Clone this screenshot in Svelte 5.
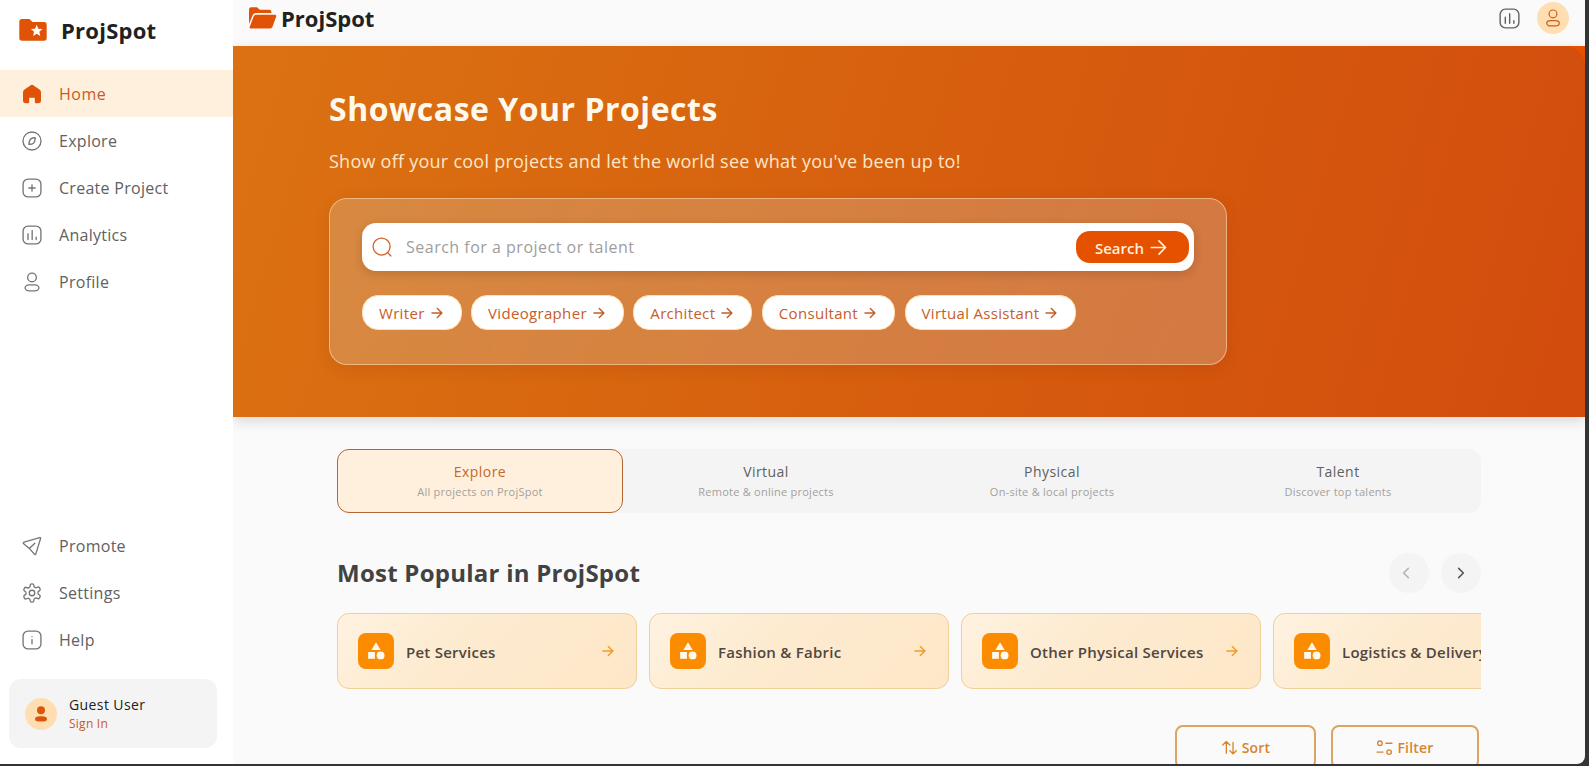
<script lang="ts">
  type NavItem = { label: string; icon: string };

  const mainNav: NavItem[] = [
    { label: "Home", icon: "home" },
    { label: "Explore", icon: "compass" },
    { label: "Create Project", icon: "add" },
    { label: "Analytics", icon: "chart" },
    { label: "Profile", icon: "user" },
  ];

  const footerNav: NavItem[] = [
    { label: "Promote", icon: "send" },
    { label: "Settings", icon: "gear" },
    { label: "Help", icon: "info" },
  ];

  const chips = ["Writer", "Videographer", "Architect", "Consultant", "Virtual Assistant"];

  const tabs = [
    { label: "Explore", hint: "All projects on ProjSpot" },
    { label: "Virtual", hint: "Remote & online projects" },
    { label: "Physical", hint: "On-site & local projects" },
    { label: "Talent", hint: "Discover top talents" },
  ];

  const categories = [
    "Pet Services",
    "Fashion & Fabric",
    "Other Physical Services",
    "Logistics & Delivery",
  ];

  let activePage = $state("Home");
  let activeTab = $state("Explore");
  let query = $state("");
</script>

{#snippet icon(name: string, size: number)}
  <svg
    class="icon"
    width={size}
    height={size}
    viewBox="0 0 24 24"
    fill="none"
    stroke="currentColor"
    stroke-width="1.6"
    stroke-linecap="round"
    stroke-linejoin="round"
    aria-hidden="true"
  >
    {#if name === "home"}
      <path
        fill="currentColor"
        stroke="none"
        transform="translate(-1.2 -1.2) scale(1.1)"
        d="M10.2 2.600 3.900 7.200C2.800 8 2.200 9.200 2.200 10.600v8.400a3 3 0 0 0 3 3H8a.9.900 0 0 0 .9-.9v-4.300a.6.600 0 0 1 .6-.6h5a.6.600 0 0 1 .6.600v4.300a.9.900 0 0 0 .9.900h2.800a3 3 0 0 0 3-3v-8.400c0-1.400-.6-2.600-1.700-3.400l-6.300-4.600a3 3 0 0 0-3.600 0z"
      />
    {:else if name === "compass"}
      <circle cx="12" cy="12" r="10.8" />
      <path d="M16 8.2c-1.8-.2-3.7.1-5 .9-1.5.9-2.4 3.4-2.8 6.8 2.5.2 4.2-.2 5.5-1.2 1.2-1 2-3.4 2.3-6.5z" />
    {:else if name === "add"}
      <rect x="1.3" y="1.3" width="21.4" height="21.4" rx="6" />
      <path d="M8.2 12h7.6M12 8.2v7.6" />
    {:else if name === "chart"}
      <rect x="1.3" y="1.3" width="21.4" height="21.4" rx="6" />
      <path d="M7.2 10.5v7M12.2 6.5v11M17 14.5v3" />
    {:else if name === "user"}
      <circle cx="12" cy="6.5" r="5.2" />
      <rect x="3.7" y="15.4" width="16.6" height="7.2" rx="5" ry="3.6" />
    {:else if name === "send"}
      <path d="M2.5 7.4 21.2 1.9c.8-.2 1.3.3 1.1 1.1L16.6 21.5c-.3.9-1.3 1-1.8.2L8.8 14.9 2 9.3c-.8-.6-.5-1.6.5-1.9zM8.8 14.9l6.6-6.2" />
    {:else if name === "gear"}
      <circle cx="12" cy="12" r="3.3" />
      <path
        d="M12.22 1h-.44a2 2 0 0 0-2 2v.68a2 2 0 0 1-1 1.73l-.63.35a2 2 0 0 1-2 0l-.45-.28a2 2 0 0 0-2.73.73l-.52.88a2 2 0 0 0 .73 2.73l.65.4a2 2 0 0 1 1 1.72v.51a2 2 0 0 1-1 1.74l-.65.39a2 2 0 0 0-.73 2.73l.52.88a2 2 0 0 0 2.73.73l.45-.28a2 2 0 0 1 2 0l.63.35a2 2 0 0 1 1 1.73V21a2 2 0 0 0 2 2h.44a2 2 0 0 0 2-2v-.68a2 2 0 0 1 1-1.73l.63-.35a2 2 0 0 1 2 0l.45.28a2 2 0 0 0 2.73-.73l.52-.89a2 2 0 0 0-.73-2.73l-.65-.38a2 2 0 0 1-1-1.74v-.5a2 2 0 0 1 1-1.74l.65-.39a2 2 0 0 0 .73-2.73l-.52-.88a2 2 0 0 0-2.73-.73l-.45.28a2 2 0 0 1-2 0l-.63-.35a2 2 0 0 1-1-1.73V3a2 2 0 0 0-2-2z"
      />
    {:else if name === "info"}
      <rect x="1.3" y="1.3" width="21.4" height="21.4" rx="6" />
      <path d="M12 11.5v5M12 8v.2" />
    {:else if name === "search"}
      <circle cx="11.5" cy="11.5" r="10.2" />
      <path d="m19.5 19.5 3.2 3.2" />
    {:else if name === "arrow"}
      <path d="M4.5 12H19M12.5 5.2 19.3 12l-6.8 6.8" />
    {:else if name === "sort"}
      <path d="M7.5 20V3.5M2.5 8.5l5-5 5 5M17 5v16M12.5 16.5 17 21l4.5-4.5" />
    {:else if name === "filter"}
      <circle cx="5.5" cy="6" r="3.2" />
      <circle cx="18.5" cy="18.5" r="3.2" />
      <path d="M14 6h8.5M1.5 18.5H10" />
    {:else if name === "left"}
      <path d="M15.5 5 8.5 12l7 7" />
    {:else if name === "right"}
      <path d="m8.5 5 7 7-7 7" />
    {:else if name === "category"}
      <path
        fill="currentColor"
        stroke="none"
        d="m12 1.6 5.6 9.2H6.4zM2.5 13.3h8.2v8H2.5z"
      />
      <circle cx="17.5" cy="17.3" r="4.7" fill="currentColor" stroke="none" />
    {/if}
  </svg>
{/snippet}

{#snippet navLink(item: NavItem)}
  <button
    type="button"
    class="nav-item"
    class:active={activePage === item.label}
    onclick={() => (activePage = item.label)}
  >
    {@render icon(item.icon, 20)}
    <span>{item.label}</span>
  </button>
{/snippet}

<div class="window">
  <aside class="sidebar">
    <div class="brand">
      <svg width="28" height="22" viewBox="0 0 28 22" aria-hidden="true">
        <path fill="#e05206" d="M3 0h7.5l3 3H25a2.7 2.7 0 0 1 2.7 2.7V19A2.7 2.7 0 0 1 25 21.7H3A2.7 2.7 0 0 1 .3 19V2.7A2.7 2.7 0 0 1 3 0z" />
        <path fill="#fff" d="m17.7 5.8 1.6 4 4.2.3-3.2 2.7 1 4.1-3.6-2.2-3.6 2.2 1-4.1-3.2-2.7 4.2-.3z" />
      </svg>
      <span class="brand-name">ProjSpot</span>
    </div>
    <nav class="nav">
      {#each mainNav as item (item.label)}
        {@render navLink(item)}
      {/each}
    </nav>
    <nav class="nav nav-footer">
      {#each footerNav as item (item.label)}
        {@render navLink(item)}
      {/each}
    </nav>
    <div class="guest">
      <div class="avatar">
        <svg width="14" height="16" viewBox="0 0 14 16" fill="#d9560b" aria-hidden="true">
          <circle cx="7" cy="4.2" r="4" />
          <rect x="1" y="10.3" width="12" height="5.2" rx="5" ry="2.6" />
        </svg>
      </div>
      <div class="guest-text">
        <span class="guest-name">Guest User</span>
        <a class="sign-in" href="#sign-in">Sign In</a>
      </div>
    </div>
  </aside>

  <div class="content">
    <header class="topbar">
      <svg width="28" height="22" viewBox="0 0 28 22" fill="#e05206" aria-hidden="true">
        <path d="M0 17V2.5A2.3 2.3 0 0 1 2.3.2H8l2.8 2.6h9.400A2.200 2.200 0 0 1 22.400 5v.9H7.200A4 4 0 0 0 3.400 8.700z" />
        <path d="M7.300 7.700h18.600c1 0 1.700.9 1.300 1.900l-3.700 10.200a2.600 2.600 0 0 1-2.400 1.700H1.800c-.9 0-1.400-.7-1.100-1.600L4.600 9.500a2.800 2.800 0 0 1 2.700-1.800z" />
      </svg>
      <span class="topbar-name">ProjSpot</span>
      <div class="topbar-actions">
        {@render icon("chart", 21)}
        <div class="avatar">{@render icon("user", 18)}</div>
      </div>
    </header>

    <section class="hero">
      <div class="hero-inner">
        <h1>Showcase Your Projects</h1>
        <p>Show off your cool projects and let the world see what you've been up to!</p>
        <div class="glass">
          <div class="search">
            {@render icon("search", 20)}
            <input placeholder="Search for a project or talent" bind:value={query} />
            <button type="button" class="search-btn">
              <span>Search</span>
              {@render icon("arrow", 23)}
            </button>
          </div>
          <div class="chips">
            {#each chips as chip (chip)}
              <button type="button" class="chip">{chip}{@render icon("arrow", 16)}</button>
            {/each}
          </div>
        </div>
      </div>
    </section>

    <main>
      <div class="tabs" role="tablist">
        {#each tabs as tab (tab.label)}
          <button
            type="button"
            role="tab"
            class="tab"
            class:active={activeTab === tab.label}
            aria-selected={activeTab === tab.label}
            onclick={() => (activeTab = tab.label)}
          >
            <span class="tab-label">{tab.label}</span>
            <span class="tab-hint">{tab.hint}</span>
          </button>
        {/each}
      </div>

      <div class="section-head">
        <h2>Most Popular in ProjSpot</h2>
        <div class="pager">
          <button type="button" class="prev" aria-label="Previous" disabled>
            {@render icon("left", 16)}
          </button>
          <button type="button" aria-label="Next">{@render icon("right", 16)}</button>
        </div>
      </div>

      <div class="cards">
        {#each categories as category (category)}
          <article class="card">
            <div class="card-icon">{@render icon("category", 20)}</div>
            <span class="card-name">{category}</span>
            {@render icon("arrow", 16)}
          </article>
        {/each}
      </div>

      <div class="tools">
        <button type="button" class="tool sort">{@render icon("sort", 17)}Sort</button>
        <button type="button" class="tool filter">{@render icon("filter", 17)}Filter</button>
      </div>
    </main>
  </div>
</div>

<style>
  :global(body) {
    background: #333435;
    overflow: hidden;
  }

  .window {
    display: flex;
    width: 1585px;
    height: 764px;
    overflow: hidden;
    border-bottom-right-radius: 8px;
    background: #fafafa;
    font-family: "Open Sans", "Noto Sans", sans-serif;
    color: #212121;
  }

  button,
  input {
    font: inherit;
    letter-spacing: inherit;
    border: none;
    background: none;
    padding: 0;
    color: inherit;
  }

  button {
    cursor: pointer;
  }

  .icon {
    display: block;
    flex: none;
  }

  /* sits above the hero so its shadow stays inside the content column */
  .sidebar {
    position: relative;
    z-index: 1;
    display: flex;
    flex-direction: column;
    width: 233px;
    flex: none;
    box-sizing: border-box;
    padding-bottom: 16px;
    background: #fff;
  }

  .brand {
    display: flex;
    align-items: center;
    gap: 14px;
    height: 70px;
    padding: 0 19px 10px;
    box-sizing: border-box;
  }

  .brand-name,
  .topbar-name {
    font-size: 22px;
    font-weight: 700;
    line-height: 30px;
    letter-spacing: 0.25px;
    color: #212121;
  }

  .nav {
    display: flex;
    flex-direction: column;
  }

  .nav-footer {
    margin-top: auto;
  }

  .nav-item {
    display: flex;
    align-items: center;
    gap: 17px;
    height: 47px;
    padding-left: 22px;
    font-size: 16px;
    letter-spacing: 0.28px;
    color: #616161;
  }

  .nav-item .icon {
    color: #757575;
  }

  .nav-item.active {
    background: #fff0de;
    color: #cb5a1e;
    letter-spacing: 0.5px;
  }

  .nav-item.active .icon {
    color: #e05206;
  }

  .guest {
    display: flex;
    align-items: center;
    gap: 12px;
    height: 69px;
    margin: 16px 16px 0 9px;
    padding-left: 16px;
    border-radius: 12px;
    background: #f4f4f4;
  }

  .avatar {
    display: grid;
    place-items: center;
    width: 32px;
    height: 32px;
    border-radius: 50%;
    background: #ffdfb2;
    color: #cc5c1b;
  }

  .guest-text {
    display: flex;
    flex-direction: column;
  }

  .guest-name {
    font-size: 14px;
    font-weight: 500;
    line-height: 19px;
    letter-spacing: 0.4px;
  }

  .sign-in {
    font-size: 12px;
    line-height: 19px;
    letter-spacing: 0.25px;
    text-decoration: none;
    color: #cb5a1e;
  }

  .content {
    display: flex;
    flex-direction: column;
    flex: 1;
    min-width: 0;
  }

  .topbar {
    display: flex;
    align-items: center;
    height: 46px;
    flex: none;
    box-sizing: border-box;
    padding: 0 16px 10px;
  }

  .topbar-name {
    margin-left: 4px;
    letter-spacing: 0;
  }

  .topbar-actions {
    display: flex;
    align-items: center;
    gap: 17px;
    margin-left: auto;
    color: #616161;
  }

  .hero {
    flex: none;
    height: 371px;
    background: #e65100;
    box-shadow: 0 4px 12px rgba(0, 0, 0, 0.14);
  }

  .hero-inner {
    height: 100%;
    box-sizing: border-box;
    padding: 41px 96px 0;
    border-top-right-radius: 20px;
    background: linear-gradient(106deg, #db7212 0%, #d65d0e 55%, #d24c0d 100%);
  }

  h1 {
    margin: 0;
    font-size: 32px;
    line-height: 44px;
    font-weight: 700;
    letter-spacing: 0.5px;
    color: #fff8ec;
  }

  .hero p {
    margin: 18px 0 0;
    font-size: 18px;
    line-height: 25px;
    letter-spacing: 0.25px;
    color: #ffe6c8;
  }

  .glass {
    width: 898px;
    height: 167px;
    margin-top: 24px;
    padding: 24px 32px;
    box-sizing: border-box;
    border: 1px solid rgba(255, 215, 170, 0.6);
    border-radius: 18px;
    background: linear-gradient(120deg, rgba(214, 164, 110, 0.5), rgba(210, 158, 125, 0.48));
    box-shadow: 0 4px 16px rgba(120, 40, 0, 0.14);
  }

  .search {
    display: flex;
    align-items: center;
    height: 48px;
    box-sizing: border-box;
    padding: 0 5px 0 10px;
    border-radius: 14px;
    background: #fff;
    box-shadow: 0 3px 10px rgba(60, 30, 0, 0.18);
    color: #d2622b;
  }

  .search input {
    flex: 1;
    min-width: 0;
    height: 30px;
    margin-left: 14px;
    font-size: 16px;
    letter-spacing: 0.5px;
    color: #212121;
    outline: none;
  }

  .search input::placeholder {
    color: #9e9e9e;
    opacity: 1;
  }

  .search-btn {
    display: flex;
    align-items: center;
    justify-content: center;
    gap: 3px;
    width: 113px;
    height: 32px;
    border-radius: 14px;
    background: #e65100;
    color: #fff0dc;
    font-size: 15px;
    font-weight: 600;
    line-height: 20px;
  }

  .search-btn span {
    padding-top: 2px;
  }

  .search-btn .icon {
    stroke-width: 1.8;
  }

  .chips {
    display: flex;
    gap: 9.5px;
    margin-top: 24px;
  }

  .chip {
    display: flex;
    align-items: center;
    gap: 4px;
    height: 35px;
    box-sizing: border-box;
    padding: 0 16px;
    border: 1px solid #ffe0b2;
    border-radius: 16px;
    background: #fff;
    color: #c65d27;
    font-size: 15px;
    font-weight: 500;
    letter-spacing: 0.32px;
    white-space: nowrap;
  }

  .chip .icon,
  .card > .icon {
    stroke-width: 2.2;
  }

  main {
    display: flex;
    flex-direction: column;
    padding: 32px 104px 0;
  }

  .tabs {
    display: grid;
    grid-template-columns: repeat(4, 1fr);
    height: 64px;
    border-radius: 12px;
    background: #f4f4f4;
  }

  .tab {
    display: flex;
    flex-direction: column;
    align-items: center;
    justify-content: center;
    border: 1px solid transparent;
    border-radius: 12px;
    color: #616161;
  }

  .tab.active {
    border-color: #b5652f;
    background: #fff0de;
    color: #c4682c;
  }

  .tab-label {
    font-size: 14px;
    font-weight: 500;
    line-height: 20px;
    letter-spacing: 0.45px;
  }

  .tab-hint {
    font-size: 11px;
    line-height: 16px;
    letter-spacing: 0.25px;
    margin-top: 2px;
    color: #a3a09d;
  }

  .section-head {
    display: flex;
    align-items: center;
    justify-content: space-between;
    margin-top: 40px;
    height: 40px;
  }

  h2 {
    margin: 0;
    font-size: 24px;
    line-height: 32px;
    font-weight: 700;
    letter-spacing: 0.25px;
    color: #424242;
  }

  .pager {
    display: flex;
    gap: 12px;
  }

  .pager button {
    display: grid;
    place-items: center;
    width: 40px;
    height: 40px;
    border-radius: 50%;
    background: #f4f4f4;
    color: #555;
  }

  .pager .icon {
    stroke-width: 2.3;
  }

  .pager .prev {
    padding-right: 7px;
    color: #b4b4b4;
  }

  .cards {
    display: flex;
    gap: 12px;
    margin-top: 20px;
    overflow: hidden;
  }

  .card {
    display: flex;
    align-items: center;
    flex: none;
    width: 300px;
    height: 76px;
    box-sizing: border-box;
    padding: 0 20px;
    border: 1px solid #f0cf98;
    border-radius: 12px;
    background: linear-gradient(135deg, #fff2e0, #fdebd0 40%, #fde7c8);
    color: #f39a2c;
  }

  .card-icon {
    display: grid;
    place-items: center;
    width: 36px;
    height: 36px;
    border-radius: 8px;
    background: #fb8c00;
    color: #fff8ec;
  }

  .card-name {
    flex: 1;
    margin-left: 12px;
    padding-top: 2px;
    font-size: 15px;
    font-weight: 600;
    line-height: 20px;
    letter-spacing: 0.25px;
    white-space: nowrap;
    color: #4f473f;
  }

  .tools {
    display: flex;
    justify-content: flex-end;
    gap: 15px;
    margin-top: 36px;
    padding-right: 2px;
  }

  .tool {
    display: flex;
    align-items: center;
    justify-content: center;
    gap: 4px;
    height: 44px;
    box-sizing: border-box;
    border: 2px solid #dba561;
    border-radius: 8px;
    color: #d8842f;
    font-size: 14px;
    font-weight: 600;
    letter-spacing: 0.2px;
  }

  .tool .icon {
    stroke-width: 1.9;
  }

  .sort {
    width: 141px;
  }

  .filter {
    width: 148px;
  }
</style>
